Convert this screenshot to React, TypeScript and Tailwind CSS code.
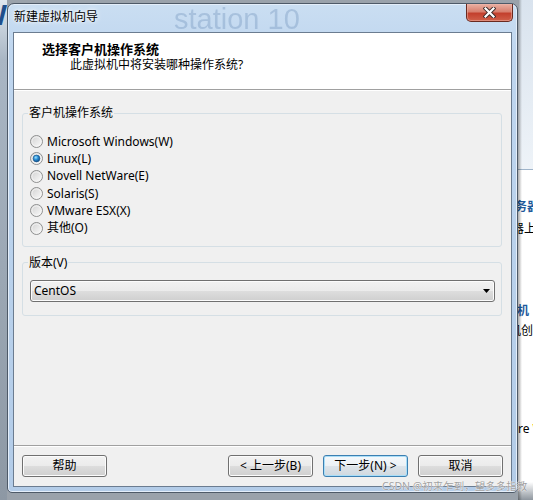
import type React from 'react';

const uiFont = "font-['Noto_Sans','Noto_Sans_CJK_SC',sans-serif]";

function Radio({ checked = false }: { checked?: boolean }): React.ReactElement {
  return (
    <svg width="13" height="13" viewBox="0 0 13 13" className="shrink-0">
      <defs>
        <linearGradient id="radioFill" x1="0" y1="0" x2="1" y2="1">
          <stop offset="0" stopColor="#cfcfcf" />
          <stop offset="1" stopColor="#fdfdfd" />
        </linearGradient>
        <radialGradient id="radioDot" cx="0.4" cy="0.35" r="0.7">
          <stop offset="0" stopColor="#9ee4ff" />
          <stop offset="0.45" stopColor="#2b8fd6" />
          <stop offset="1" stopColor="#0c467f" />
        </radialGradient>
      </defs>
      <circle cx="6.5" cy="6.5" r="6" fill="url(#radioFill)" stroke="#8e8f8f" />
      <circle cx="6.5" cy="6.5" r="4.6" fill="none" stroke="#f6f6f6" strokeWidth="0.8" />
      {checked && <circle cx="6.5" cy="6.5" r="3.4" fill="url(#radioDot)" stroke="#1a5488" strokeWidth="0.6" />}
    </svg>
  );
}

function WinButton({ label, primary = false }: { label: string; primary?: boolean }): React.ReactElement {
  return (
    <button
      type="button"
      className={
        primary
          ? 'w-[85px] h-[22px] rounded-[3px] border border-[#3c7fb1] bg-[linear-gradient(#f4f8fb_0%,#ecf1f5_50%,#dde4ea_51%,#d0d8df_100%)] shadow-[inset_0_0_0_1px_#a9def8] text-[12px] leading-[20px] text-black'
          : 'w-[85px] h-[22px] rounded-[3px] border border-[#707070] bg-[linear-gradient(#f2f2f2_0%,#ebebeb_50%,#dddddd_51%,#cfcfcf_100%)] shadow-[inset_0_0_0_1px_#fcfcfc] text-[12px] leading-[20px] text-black'
      }
    >
      {label}
    </button>
  );
}

const osList: { label: string; checked?: boolean }[] = [
  { label: 'Microsoft Windows(W)' },
  { label: 'Linux(L)', checked: true },
  { label: 'Novell NetWare(E)' },
  { label: 'Solaris(S)' },
  { label: 'VMware ESX(X)' },
  { label: '其他(O)' },
];

export default function App(): React.ReactElement {
  return (
    <div className={`relative w-[533px] h-[500px] overflow-hidden flex items-start bg-[#9aa2ab] ${uiFont}`}>
      {/* left strip: window behind */}
      <div className="w-[7px] h-full shrink-0 overflow-hidden flex flex-col bg-[linear-gradient(#dfe7ef_0%,#a9b6c4_12%,#8d98a4_100%)]">
        <div className="flex justify-end text-[30px] leading-[30px] font-bold text-[#1f4f8c] font-['Liberation_Sans',sans-serif] whitespace-nowrap">
          W
        </div>
      </div>

      {/* dialog window */}
      <div className="w-[511px] h-[490px] mt-[3px] shrink-0 flex flex-col px-[5px] pb-[5px] rounded-t-[7px] rounded-b-[5px] border border-[#4e5a68] bg-[linear-gradient(180deg,#cadef2_0%,#bfd6ef_10%,#b3cce8_100%)] shadow-[inset_0_0_0_1px_#e4eefa]">
        {/* title bar */}
        <div className="relative h-[28px] flex items-start justify-between">
          <span className="absolute left-[161px] top-[1px] text-[29px] leading-none font-['Liberation_Sans',sans-serif] text-[#5f84b0] opacity-30 blur-[0.6px] pointer-events-none whitespace-nowrap">
            station 10
          </span>
          <span className="relative mt-[5px] pl-[1px] text-[12px] leading-[16px] text-black [text-shadow:0_0_6px_#ffffff,0_0_3px_#ffffff]">
            新建虚拟机向导
          </span>
          <button
            type="button"
            aria-label="Close"
            className="relative w-[47px] h-[18px] -mr-px flex items-center justify-center rounded-b-[5px] border border-t-0 border-[#6a2a20] bg-[linear-gradient(#eab0a3_0%,#d8806f_45%,#c3402d_55%,#d0604a_100%)] shadow-[inset_0_0_0_1px_#f0b8ab80]"
          >
            <svg width="13" height="11" viewBox="0 0 13 11">
              <path d="M2.5 1.5 L10.5 9.5 M10.5 1.5 L2.5 9.5" stroke="#3b2a28" strokeWidth="4" strokeLinecap="square" />
              <path d="M2.5 1.5 L10.5 9.5 M10.5 1.5 L2.5 9.5" stroke="#ffffff" strokeWidth="2.2" strokeLinecap="square" />
            </svg>
          </button>
        </div>

        {/* client area */}
        <div className="flex-1 flex flex-col border border-[#6b7c90] bg-[#f0f0f0] text-[12px] leading-[16px] text-black">
          {/* header */}
          <div className="h-[57px] shrink-0 bg-white border-b border-[#a0a0a0] pt-[8px] pl-[28px]">
            <p className="text-[13px] font-bold leading-[16px]">选择客户机操作系统</p>
            <p className="pl-[28px] leading-[16px]">此虚拟机中将安装哪种操作系统?</p>
          </div>

          {/* body */}
          <div className="flex-1 flex flex-col border-t border-white pt-[14px] pl-[8px] pr-[9px]">
            <fieldset className="border border-[#d5dfe5] rounded-[3px] pl-[5px] pr-[6px] pb-[9px]">
              <legend className="px-[1px] leading-[16px]">客户机操作系统</legend>
              <div className="mt-[12px] pl-[2px] flex flex-col">
                {osList.map((os) => (
                  <label key={os.label} className="h-[17.3px] flex items-center gap-[4px]">
                    <Radio checked={os.checked} />
                    <span>{os.label}</span>
                  </label>
                ))}
              </div>
            </fieldset>

            <fieldset className="mt-[8px] border border-[#d5dfe5] rounded-[3px] pl-[5px] pr-[6px] pb-[13px]">
              <legend className="px-[1px] leading-[16px]">版本(V)</legend>
              <div className="mt-[9px] ml-[2px] h-[22px] flex items-center justify-between rounded-[3px] border border-[#707070] bg-[linear-gradient(#f2f2f2_0%,#ebebeb_50%,#dddddd_51%,#cfcfcf_100%)] shadow-[inset_0_0_0_1px_#fcfcfc] pl-[3px] pr-[4px]">
                <span>CentOS</span>
                <svg width="7" height="4" viewBox="0 0 7 4">
                  <path d="M0 0 H7 L3.5 4 Z" fill="#000" />
                </svg>
              </div>
            </fieldset>
          </div>

          {/* footer */}
          <div className="h-[41px] shrink-0 border-t border-[#a0a0a0] shadow-[inset_0_1px_0_#ffffff] flex items-start pt-[9px] pl-[8px] pr-[8px]">
            <WinButton label="帮助" />
            <div className="flex-1" />
            <div className="flex gap-[10px]">
              <WinButton label="< 上一步(B)" />
              <WinButton label="下一步(N) >" primary />
              <WinButton label="取消" />
            </div>
          </div>
        </div>
      </div>

      {/* right strip: main window behind */}
      <div className="relative flex-1 h-full overflow-hidden flex flex-col bg-white text-[12px] leading-[16px] whitespace-nowrap">
        <div className="h-[170px] shrink-0 border-b border-[#9fb4ca] bg-[linear-gradient(#d9e3ee,#eef3f8)]" />
        <div className="mt-[29px] -ml-[3px] font-bold text-[#1e5a9c]">务器</div>
        <div className="mt-[6px] -ml-[6px] text-black">器上</div>
        <div className="mt-[66px] -ml-[1px] font-bold text-[#1e5a9c]">机</div>
        <div className="mt-[4px] -ml-[9px] text-black">机创</div>
        <div className="mt-[82px] ml-[0px] text-black">
          re <span className="text-[#d99a00] font-bold">V</span>
        </div>
        <div className="flex-1" />
        <div className="h-[18px] bg-[linear-gradient(#ffffff00,#8e969e)]" />
        <div className="absolute left-0 top-0 h-full w-[4px] bg-[linear-gradient(90deg,#00000055,#00000000)]" />
      </div>

      {/* watermark */}
      <div className="absolute left-[382px] top-[479px] text-[10.5px] leading-[14px] text-[#a0a0a0] [text-shadow:0_0_1px_#ffffff,0_0_1px_#ffffff] whitespace-nowrap">
        CSDN @初来乍到，望多多指教
      </div>
    </div>
  );
}
